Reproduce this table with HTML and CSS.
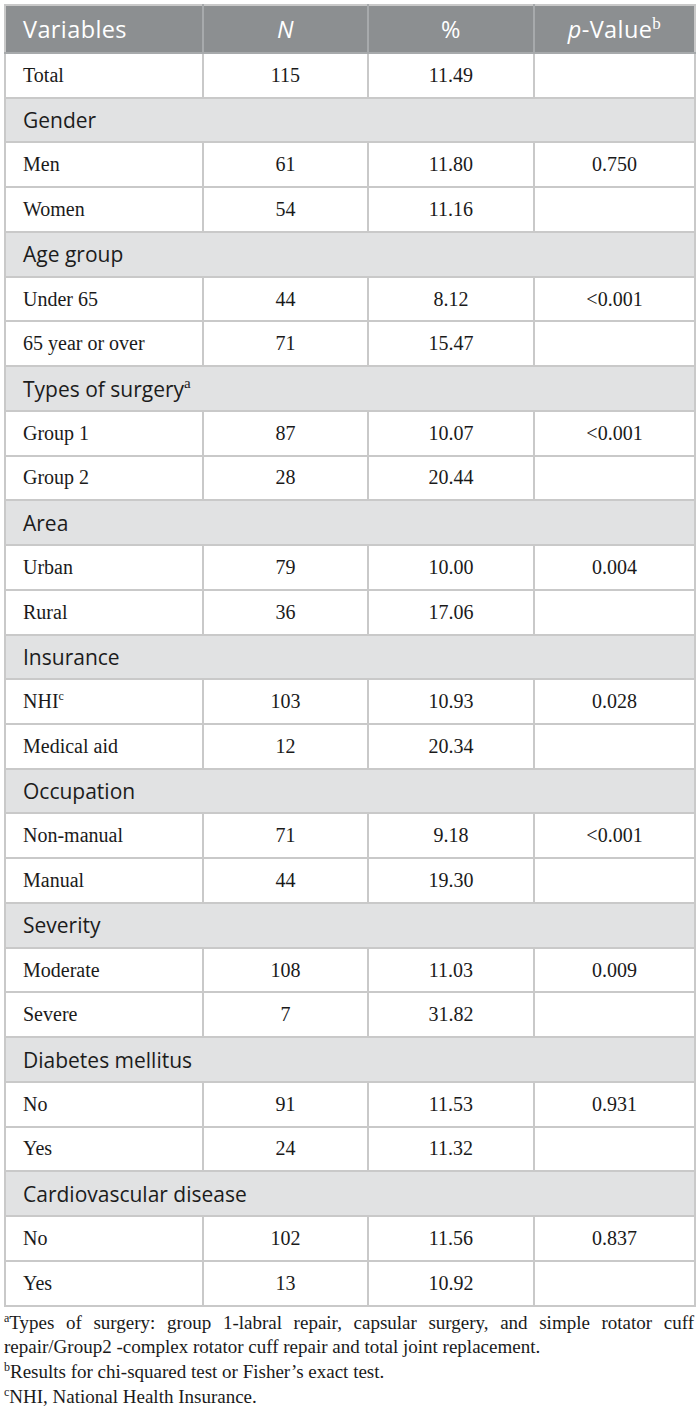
FILE: index.html
```html
<!DOCTYPE html>
<html lang="en">
<head>
<meta charset="utf-8">
<title>Table</title>
<link rel="stylesheet" href="styles.css">
</head>
<body>
<div class="wrap">
<table class="data">
  <colgroup>
    <col class="c1"><col class="c2"><col class="c3"><col class="c4">
  </colgroup>
  <thead>
    <tr class="head">
      <th class="left">Variables</th>
      <th><i>N</i></th>
      <th>%</th>
      <th><i>p</i>-Value<sup>b</sup></th>
    </tr>
  </thead>
  <tbody>
    <tr><td class="left">Total</td><td>115</td><td>11.49</td><td></td></tr>
    <tr class="group"><td colspan="4">Gender</td></tr>
    <tr><td class="left">Men</td><td>61</td><td>11.80</td><td>0.750</td></tr>
    <tr><td class="left">Women</td><td>54</td><td>11.16</td><td></td></tr>
    <tr class="group"><td colspan="4">Age group</td></tr>
    <tr><td class="left">Under 65</td><td>44</td><td>8.12</td><td>&lt;0.001</td></tr>
    <tr><td class="left">65 year or over</td><td>71</td><td>15.47</td><td></td></tr>
    <tr class="group"><td colspan="4">Types of surgery<sup>a</sup></td></tr>
    <tr><td class="left">Group 1</td><td>87</td><td>10.07</td><td>&lt;0.001</td></tr>
    <tr><td class="left">Group 2</td><td>28</td><td>20.44</td><td></td></tr>
    <tr class="group"><td colspan="4">Area</td></tr>
    <tr><td class="left">Urban</td><td>79</td><td>10.00</td><td>0.004</td></tr>
    <tr><td class="left">Rural</td><td>36</td><td>17.06</td><td></td></tr>
    <tr class="group"><td colspan="4">Insurance</td></tr>
    <tr><td class="left">NHI<sup>c</sup></td><td>103</td><td>10.93</td><td>0.028</td></tr>
    <tr><td class="left">Medical aid</td><td>12</td><td>20.34</td><td></td></tr>
    <tr class="group"><td colspan="4">Occupation</td></tr>
    <tr><td class="left">Non-manual</td><td>71</td><td>9.18</td><td>&lt;0.001</td></tr>
    <tr><td class="left">Manual</td><td>44</td><td>19.30</td><td></td></tr>
    <tr class="group"><td colspan="4">Severity</td></tr>
    <tr><td class="left">Moderate</td><td>108</td><td>11.03</td><td>0.009</td></tr>
    <tr><td class="left">Severe</td><td>7</td><td>31.82</td><td></td></tr>
    <tr class="group"><td colspan="4">Diabetes mellitus</td></tr>
    <tr><td class="left">No</td><td>91</td><td>11.53</td><td>0.931</td></tr>
    <tr><td class="left">Yes</td><td>24</td><td>11.32</td><td></td></tr>
    <tr class="group"><td colspan="4">Cardiovascular disease</td></tr>
    <tr><td class="left">No</td><td>102</td><td>11.56</td><td>0.837</td></tr>
    <tr><td class="left">Yes</td><td>13</td><td>10.92</td><td></td></tr>
  </tbody>
</table>
<div class="notes">
  <p class="justify"><sup>a</sup>Types of surgery: group 1-labral repair, capsular surgery, and simple rotator cuff repair/Group2 -complex rotator cuff repair and total joint replacement.</p>
  <p><sup>b</sup>Results for chi-squared test or Fisher’s exact test.</p>
  <p><sup>c</sup>NHI, National Health Insurance.</p>
</div>
</div>
</body>
</html>
```

FILE: styles.css
```css
html, body {
  margin: 0;
  padding: 0;
  background: #ffffff;
}

.wrap {
  padding: 4px 6px 0 4px;
  width: 690px;
}

.data {
  width: 690px;
  table-layout: fixed;
  border-collapse: collapse;
  border: 2px solid #c9c9c9;
}

.c1 { width: 198px; }
.c2 { width: 165px; }
.c3 { width: 166px; }
.c4 { width: 161px; }

.data th,
.data td {
  border: 2px solid #c9c9c9;
  padding: 0 8px;
  text-align: center;
  vertical-align: middle;
}

.data .left {
  text-align: left;
  padding-left: 17px;
}

.head {
  height: 48px;
}

.head th {
  background: #8c8f91;
  color: #ffffff;
  font-family: "Open Sans", "Noto Sans", sans-serif;
  font-weight: 400;
  font-size: 23.5px;
  letter-spacing: 0.4px;
  border-color: #a7aaac;
  border-top-color: #c9c9c9;
}

.head th:first-child { border-left-color: #c9c9c9; }
.head th:last-child { border-right-color: #c9c9c9; }

.head sup {
  font-family: "Liberation Serif", serif;
  font-size: 17px;
  line-height: 0;
  vertical-align: 9px;
}

tbody tr {
  height: 44.74px;
}

tbody td {
  font-family: "Liberation Serif", "Times New Roman", serif;
  font-size: 20px;
  color: #1a1a1a;
}

tbody td sup {
  font-size: 12px;
  line-height: 0;
  vertical-align: 8px;
}

.group td {
  background: #e1e2e3;
  font-family: "Open Sans", "Noto Sans", sans-serif;
  font-size: 21px;
  color: #1c1c1c;
  text-align: left;
  padding-left: 17px;
}

.group td sup {
  font-family: "Liberation Serif", serif;
  font-size: 15px;
  vertical-align: 9px;
}

.notes {
  margin-top: 4px;
  font-family: "Liberation Serif", "Times New Roman", serif;
  font-size: 19px;
  line-height: 24.7px;
  color: #1a1a1a;
}

.notes p {
  margin: 0;
}

.notes .justify {
  text-align: justify;
}

.notes sup {
  font-size: 12px;
  line-height: 1;
  vertical-align: top;
  position: relative;
  top: 1px;
}
```
